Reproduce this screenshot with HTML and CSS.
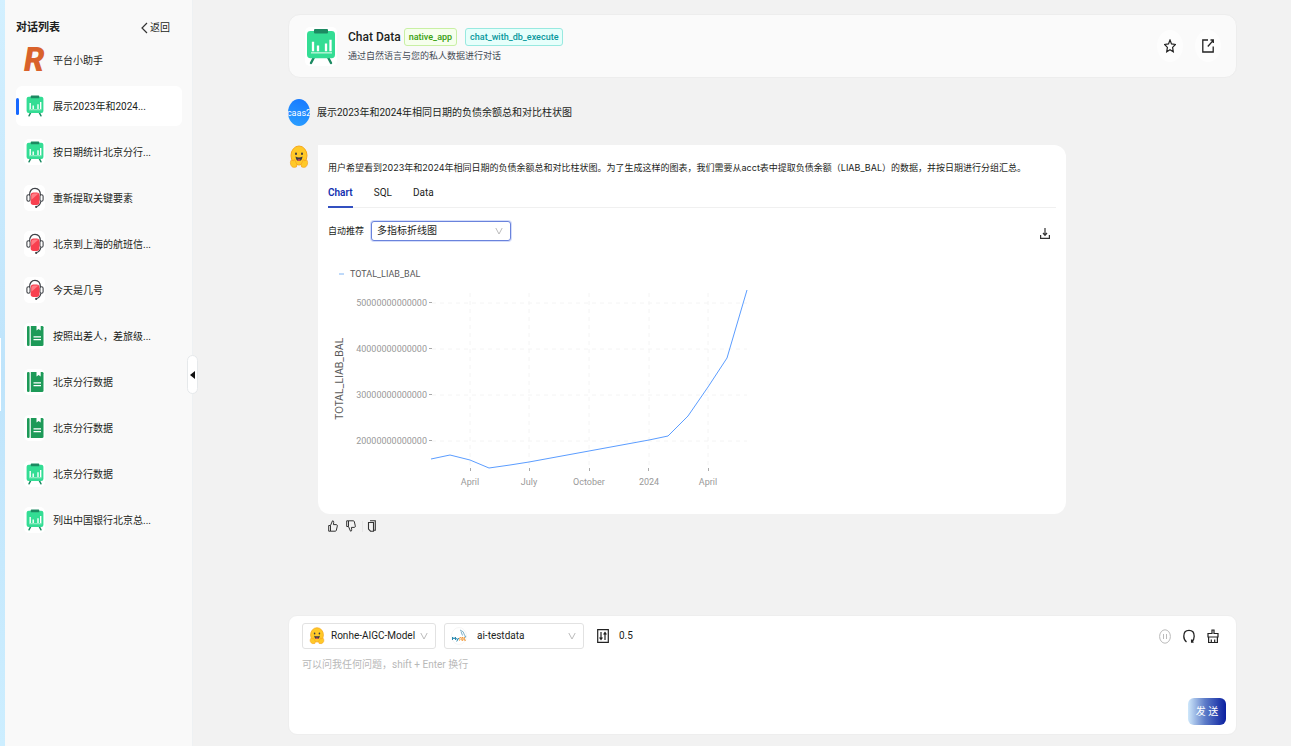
FILE: index.html
```
<!DOCTYPE html>
<html lang="zh-CN">
<head>
    <meta charset="UTF-8">
    <title>Chat Data</title>
    <link rel="stylesheet" href="styles.css">
</head>
<body>
    <!-- 图标 -->
    <svg class="sprite" aria-hidden="true">
        <symbol id="i-board" viewBox="0 0 30 38" preserveAspectRatio="none">
            <path d="M8 30l-3 6M22 30l3 6" stroke="#1c8a62" stroke-width="2.4" stroke-linecap="round"/>
            <rect x="1" y="3" width="28" height="28" rx="3.5" fill="#33dd94"/>
            <rect x="8" y="1" width="14" height="4.6" rx="1" fill="#1c8a62"/>
            <path d="M7 14v10M12 18v6M20 16v8M24.500 12v12" stroke="#fff" stroke-width="2.300"/>
            <path d="M5 25.500h21" stroke="#b5f3d6" stroke-width="1.500"/>
        </symbol>
        <symbol id="i-headset" viewBox="0 0 20 24" preserveAspectRatio="none">
            <path d="M4 9C4 4 6.500 1.500 10 1.500S16 4 16 9" fill="none" stroke="#3f4247" stroke-width="1.400"/>
            <rect x="1" y="8.500" width="3.500" height="7" rx="1.700" fill="#fff" stroke="#3f4247" stroke-width="1.200"/>
            <rect x="15.500" y="8.500" width="3.500" height="7" rx="1.700" fill="#fff" stroke="#3f4247" stroke-width="1.200"/>
            <rect x="5.200" y="6" width="9.800" height="13.500" rx="3" fill="#f8404f"/>
            <path d="M6 9.500Q6.500 7 9 7h5l-8 7z" fill="#ff7d85"/>
            <path d="M16.500 15.500Q16 20 11.500 21.500" fill="none" stroke="#3f4247" stroke-width="1.300"/>
            <circle cx="11.300" cy="21.700" r="1.200" fill="#3f4247"/>
        </symbol>
        <symbol id="i-book" viewBox="0 0 18 24" preserveAspectRatio="none">
            <rect x="1" y="1" width="2.600" height="22" rx="1.200" fill="#1d9a58"/>
            <path d="M4.800 1H16a1.500 1.500 0 0 1 1.500 1.500v19A1.500 1.500 0 0 1 16 23H4.800z" fill="#1d9a58"/>
            <path d="M10.500 1h4.200v5l-2.100-1.700L10.500 6z" fill="#fff"/>
            <path d="M7.500 13h7.500M7.500 16h7.500" stroke="#fff" stroke-width="1.200"/>
        </symbol>
        <symbol id="i-hug" viewBox="0 0 20 24" preserveAspectRatio="none">
            <ellipse cx="10" cy="10.500" rx="8" ry="9.500" fill="#ffc928" stroke="#f7a81c"/>
            <ellipse cx="7" cy="8.700" rx="1" ry="1.300" fill="#3a3b45"/>
            <ellipse cx="13" cy="8.700" rx="1" ry="1.300" fill="#3a3b45"/>
            <path d="M6.500 11.500q3.500 1.800 7 0Q13 16 10 16t-3.500-4.500z" fill="#3a3b45"/>
            <path d="M8.300 15q1.700-1.700 3.400 0-1.700 1.700-3.400 0z" fill="#f24b5b"/>
            <path d="M1.800 15.500Q2.800 14.300 4.200 16l.6-1.200q1.500-.5 1.600 1.500 2.600 3.200 1 5.700-4.500 1.400-5.700-2.300-.7-2.200.1-4.200zM18.200 15.500Q17.200 14.300 15.800 16l-.6-1.200q-1.500-.5-1.600 1.500-2.600 3.200-1 5.700 4.500 1.400 5.700-2.300.7-2.200-.1-4.200z" fill="#ffc928" stroke="#f59a1b" stroke-width=".6"/>
        </symbol>
        <symbol id="i-down" viewBox="0 0 8 8">
            <path d="M.8 1L4 7l3.200-6" fill="none" stroke="#bbb"/>
        </symbol>
    </svg>

    <div class="edge"></div>

    <aside class="sidebar">
        <div class="sideHead">
            <h2>对话列表</h2>
            <a href="#" class="back">
                <svg width="7" height="12" viewBox="0 0 7 12"><path d="M6 1L1 6l5 5" fill="none" stroke="#333" stroke-width="1.200"/></svg>返回
            </a>
        </div>
        <nav class="list">
            <a href="#" class="item">
                <svg class="logo" viewBox="0 0 22 26"><text x="0" y="25">R</text></svg>
                <span>平台小助手</span>
            </a>
            <a href="#" class="item active">
                <i class="pic"><svg><use href="#i-board"/></svg></i><span>展示2023年和2024...</span>
            </a>
            <a href="#" class="item">
                <i class="pic"><svg><use href="#i-board"/></svg></i><span>按日期统计北京分行...</span>
            </a>
            <a href="#" class="item">
                <i class="pic"><svg><use href="#i-headset"/></svg></i><span>重新提取关键要素</span>
            </a>
            <a href="#" class="item">
                <i class="pic"><svg><use href="#i-headset"/></svg></i><span>北京到上海的航班信...</span>
            </a>
            <a href="#" class="item">
                <i class="pic"><svg><use href="#i-headset"/></svg></i><span>今天是几号</span>
            </a>
            <a href="#" class="item">
                <i class="pic"><svg><use href="#i-book"/></svg></i><span>按照出差人，差旅级...</span>
            </a>
            <a href="#" class="item">
                <i class="pic"><svg><use href="#i-book"/></svg></i><span>北京分行数据</span>
            </a>
            <a href="#" class="item">
                <i class="pic"><svg><use href="#i-book"/></svg></i><span>北京分行数据</span>
            </a>
            <a href="#" class="item">
                <i class="pic"><svg><use href="#i-board"/></svg></i><span>北京分行数据</span>
            </a>
            <a href="#" class="item">
                <i class="pic"><svg><use href="#i-board"/></svg></i><span>列出中国银行北京总...</span>
            </a>
        </nav>
        <button type="button" class="fold" aria-label="收起">
            <svg width="5" height="8" viewBox="0 0 5 8"><path d="M5 0v8L0 4z" fill="#111"/></svg>
        </button>
    </aside>

    <main class="main">
        <header class="appHead">
            <i class="appPic"><svg><use href="#i-board"/></svg></i>
            <div class="appInfo">
                <div class="appTitle">
                    <h1>Chat Data</h1>
                    <span class="tag green">native_app</span>
                    <span class="tag cyan">chat_with_db_execute</span>
                </div>
                <p>通过自然语言与您的私人数据进行对话</p>
            </div>
            <button type="button" class="round" aria-label="收藏">
                <svg width="12" height="14" viewBox="0 0 12 14"><path d="M6 1l1.500 3.900 3.900.6-2.800 2.900.7 4.400L6 10.700l-3.300 2.100.7-4.400L.6 5.500l3.900-.6z" fill="none" stroke="#222" stroke-width="1.200"/></svg>
            </button>
            <button type="button" class="round" aria-label="分享">
                <svg width="12" height="14" viewBox="0 0 12 14"><path d="M6 1H.8v12h10.400V7.500M5.800 7.500L11 1.600M8.500 1H11.300v3" fill="none" stroke="#222" stroke-width="1.300"/></svg>
            </button>
        </header>

        <section class="talk">
            <div class="row">
                <div class="avatar">caas2</div>
                <p class="ask">展示2023年和2024年相同日期的负债余额总和对比柱状图</p>
            </div>
            <div class="row answerRow">
                <i class="bot"><svg><use href="#i-hug"/></svg></i>
                <div class="answer">
                    <p class="reply">用户希望看到2023年和2024年相同日期的负债余额总和对比柱状图。为了生成这样的图表，我们需要从acct表中提取负债余额（LIAB_BAL）的数据，并按日期进行分组汇总。</p>
                    <div class="tabs" role="tablist">
                        <button type="button" role="tab" class="on" aria-selected="true">Chart</button>
                        <button type="button" role="tab">SQL</button>
                        <button type="button" role="tab">Data</button>
                    </div>
                    <div class="tools">
                        <label for="chartType">自动推荐</label>
                        <div class="pick">
                            <select id="chartType" class="focus">
                                <option>多指标折线图</option>
                            </select>
                            <svg class="arrow"><use href="#i-down"/></svg>
                        </div>
                        <button type="button" class="download" aria-label="下载">
                            <svg width="10" height="11" viewBox="0 0 10 11"><path d="M.6 7v3.300h8.800V7M5 0v7M3 5l2 2.300L7 5" fill="none" stroke="#333" stroke-width="1.200"/></svg>
                        </button>
                    </div>
                    <svg class="chart" width="440" height="240" viewBox="0 0 440 240">
                        <path class="legendLine" d="M11 14h5"/>
                        <text class="legend" x="22" y="17">TOTAL_LIAB_BAL</text>
                        <text class="axisName" transform="translate(15 160) rotate(-90)">TOTAL_LIAB_BAL</text>
                        <path class="grid" d="M104 43h315M104 89h315M104 135h315M104 181h315M142 33v175M201 33v175M261 33v175M321 33v175M380 33v175"/>
                        <path class="tick" d="M101 42.500h3M101 88.500h3M101 134.500h3M101 180.500h3M142.500 208v3M201.500 208v3M261.500 208v3M320.500 208v3M380.500 208v3"/>
                        <g class="yLabel">
                            <text x="99" y="46">50000000000000</text>
                            <text x="99" y="92">40000000000000</text>
                            <text x="99" y="138">30000000000000</text>
                            <text x="99" y="184">20000000000000</text>
                        </g>
                        <g class="xLabel">
                            <text x="142" y="225">April</text>
                            <text x="201" y="225">July</text>
                            <text x="261" y="225">October</text>
                            <text x="321" y="225">2024</text>
                            <text x="380" y="225">April</text>
                        </g>
                        <polyline class="line" points="103,199 122,195 142,200 161,208 182,205 201,202 261,191 321,180 340,176 360,156 380,127 399,98 419,30"/>
                    </svg>
                </div>
            </div>
            <div class="feedback">
                <button type="button" aria-label="赞">
                    <svg width="10" height="12" viewBox="0 0 10 12"><path d="M.7 5.500h1.800v5.700H.7zM2.500 5.500L4.500.8q1.500 0 1.200 1.700L5.400 4.600h3q1.200.3.900 1.500l-1 4.300q-.2.800-1 .8H2.500" fill="none" stroke="#333"/></svg>
                </button>
                <button type="button" aria-label="踩">
                    <svg width="10" height="12" viewBox="0 0 10 12"><path d="M.7 6.500h1.800V.8H.7zM2.500 6.500l2 4.700q1.500 0 1.200-1.700L5.400 7.400h3q1.200-.3.900-1.500l-1-4.300q-.2-.8-1-.8H2.500" fill="none" stroke="#333"/></svg>
                </button>
                <span class="split"></span>
                <button type="button" aria-label="复制">
                    <svg width="10" height="12" viewBox="0 0 10 12"><path d="M1.500 2.500H6.500v8.700H3.500L1.500 9zM3 .7h5.300V10.200H6.500" fill="none" stroke="#333" stroke-width="1.100"/></svg>
                </button>
            </div>
        </section>

        <form class="composer">
            <div class="bar">
                <div class="pick model">
                    <svg class="lead"><use href="#i-hug"/></svg>
                    <select aria-label="模型">
                        <option>Ronhe-AIGC-Model</option>
                    </select>
                    <svg class="arrow"><use href="#i-down"/></svg>
                </div>
                <div class="pick db">
                    <svg class="lead" viewBox="0 0 16 18">
                        <ellipse cx="8" cy="9" rx="7.500" ry="8.500" fill="#fff" stroke="#eee" stroke-width=".6"/>
                        <path d="M9 3q4 1 4.500 5l1.500 2-2 .2M10 4.500l1.500 4" fill="none" stroke="#5a9ab8" stroke-width=".8"/>
                        <path d="M1.500 13v-3l1.500 2 1.500-2v3M5.500 11l1 2 1.200-2M6.500 13l-.8 1.500" fill="none" stroke="#2b8ab0"/>
                        <path d="M10 10.500q-2 0-1.300 1.200t0 1.500H8M12 10.500v2.800h-1.200v-2.800zM13.300 10v3.200H15" fill="none" stroke="#f29a3c"/>
                    </svg>
                    <select aria-label="数据源">
                        <option>ai-testdata</option>
                    </select>
                    <svg class="arrow"><use href="#i-down"/></svg>
                </div>
                <button type="button" class="temp">
                    <svg width="12" height="14" viewBox="0 0 12 14"><path d="M.7.7h10.600v12.600H.7zM4 3v8M8 3v8M2.600 8.500L4 10.500l1.400-2M6.600 5.500L8 3.500l1.400 2" fill="none" stroke="#222" stroke-width="1.200"/></svg>
                    0.5
                </button>
                <div class="acts">
                    <button type="button" aria-label="暂停" disabled>
                        <svg width="12" height="15" viewBox="0 0 12 15"><ellipse cx="6" cy="7.500" rx="5.400" ry="6.700" fill="none" stroke="#bbb"/><path d="M4.500 5v5M7.500 5v5" stroke="#bbb"/></svg>
                    </button>
                    <button type="button" aria-label="重试">
                        <svg width="12" height="15" viewBox="0 0 12 15"><path d="M3.500 13Q.8 11 .8 7.300.8 1.300 6 1.300t5.200 6q0 3.700-2.400 5.400M8.600 10.500v2.600h2" fill="none" stroke="#222" stroke-width="1.300"/></svg>
                    </button>
                    <button type="button" aria-label="清空">
                        <svg width="12" height="15" viewBox="0 0 12 15"><path d="M5 4.500V1h2v3.500h4V8H1V4.500zM1.600 8v5.500h8.800V8M4.300 13.500v-3M7.700 13.500v-3" fill="none" stroke="#222" stroke-width="1.200"/></svg>
                    </button>
                </div>
            </div>
            <textarea aria-label="消息" placeholder="可以问我任何问题，shift + Enter 换行"></textarea>
            <button type="submit" class="send">发 送</button>
        </form>
    </main>
</body>
</html>
```
FILE: styles.css
```
* {
    box-sizing: border-box;
}
body {
    margin: 0;
    min-height: 100vh;
    display: flex;
    background: #f2f2f2;
    color: #1c1e21;
    font: 10px/16px Roboto, "Noto Sans CJK SC", sans-serif;
}
h1, h2, p {
    margin: 0;
}
a {
    color: inherit;
    text-decoration: none;
}
button {
    padding: 0;
    border: 0;
    background: none;
    color: inherit;
    font: inherit;
}
svg {
    display: block;
    flex: none;
}
.sprite {
    position: absolute;
    width: 0;
    height: 0;
}

/* 左侧 */
.edge {
    width: 5px;
    background: linear-gradient(#d3f0ff, #bfe4fb 50%, #cdeeff);
}
.edge:before {
    content: '';
    position: absolute;
    left: 0;
    top: 338px;
    width: 1px;
    height: 73px;
    background: #fff;
}
.sidebar {
    position: relative;
    width: 188px;
    padding: 19px 10px 0 11px;
    background: #f9f9f9;
    border-right: 1px solid #eef1f3;
}
.sideHead {
    display: flex;
    align-items: center;
    justify-content: space-between;
    height: 18px;
    padding-right: 12px;
}
.sideHead h2 {
    font-size: 11px;
    font-weight: 700;
}
.back {
    display: flex;
    align-items: center;
    gap: 2px;
}
.list {
    display: flex;
    flex-direction: column;
    gap: 6px;
    margin-top: 3px;
}
.item {
    display: flex;
    align-items: center;
    gap: 8px;
    height: 40px;
    padding-left: 8px;
    border-radius: 6px;
    white-space: nowrap;
}
.item span {
    padding-top: 1px;
}
.active {
    padding-left: 0;
    background: #fff;
}
.active:before {
    content: '';
    width: 3px;
    height: 17px;
    margin-right: -3px;
    border-radius: 2px;
    background: #1668ff;
}
.pic {
    display: flex;
    align-items: center;
    justify-content: center;
    width: 21px;
    height: 26px;
    border-radius: 5px;
    background: #fff;
}
.pic svg {
    width: 18px;
    height: 22px;
}
.logo {
    width: 21px;
    height: 26px;
    overflow: visible;
}
.logo text {
    font: italic 900 34px Roboto, sans-serif;
    fill: #d9622b;
}
.fold {
    position: absolute;
    right: -6px;
    top: 355px;
    display: flex;
    align-items: center;
    justify-content: center;
    width: 11px;
    height: 39px;
    border: 1px solid #e6e9eb;
    border-radius: 6px;
    background: #fff;
}

/* 右侧 */
.main {
    flex: 1;
    min-width: 0;
    display: flex;
    flex-direction: column;
    padding: 14px 54px 11px 95px;
}
.appHead {
    display: flex;
    align-items: center;
    height: 64px;
    padding: 0 15px 0 16px;
    border: 1px solid #ededed;
    border-radius: 12px;
    background: #fafafa;
}
.appPic {
    display: flex;
    padding: 1px;
    border-radius: 5px;
    background: #fff;
}
.appPic svg {
    width: 30px;
    height: 37px;
}
.appInfo {
    flex: 1;
    padding-left: 11px;
}
.appTitle {
    display: flex;
    align-items: center;
    height: 20px;
}
.appTitle h1 {
    margin-right: 3px;
    font-size: 12px;
    font-weight: 500;
}
.appInfo p {
    height: 18px;
    line-height: 18px;
    font-size: 9px;
    color: #444a55;
}
.tag {
    padding: 0 4px;
    border: 1px solid;
    border-radius: 3px;
    font-size: 9px;
    font-weight: 500;
}
.green {
    margin-right: 8px;
    color: #389e0d;
    background: #f6ffed;
    border-color: #c9f0a4;
}
.cyan {
    color: #08979c;
    background: #e6fffb;
    border-color: #98e9e0;
}
.round {
    display: flex;
    align-items: center;
    justify-content: center;
    width: 26px;
    height: 32px;
    margin-left: 12px;
    border-radius: 50%;
    background: #fdfdfd;
}

/* 对话 */
.talk {
    flex: 1;
    padding-top: 21px;
}
.row {
    display: flex;
    width: 82%;
}
.avatar {
    display: flex;
    align-items: center;
    justify-content: center;
    width: 22px;
    height: 27px;
    border-radius: 50%;
    overflow: hidden;
    background: linear-gradient(20deg, #2ba0ff, #1677ff);
    color: #fff;
    font-size: 9px;
}
.ask {
    padding-left: 7px;
    line-height: 27px;
}
.answerRow {
    margin-top: 19px;
}
.bot {
    width: 30px;
    padding-left: 1px;
}
.bot svg {
    width: 20px;
    height: 24px;
}
.answer {
    flex: 1;
    padding: 11px 10px 14px;
    border-radius: 0 12px 12px 12px;
    background: #fff;
}
.reply {
    font-family: Inter, "Noto Sans CJK SC", sans-serif;
    font-size: 9px;
    line-height: 24px;
}
.tabs {
    display: flex;
    gap: 21px;
    height: 28px;
    border-bottom: 1px solid #f0f0f0;
}
.tabs button {
    height: 28px;
    border-bottom: 2px solid transparent;
}
.tabs .on {
    border-color: #3350c0;
    color: #1330b0;
    font-weight: 600;
}
.tools {
    display: flex;
    align-items: center;
    gap: 7px;
    height: 22px;
    margin-top: 12px;
}
.tools label {
    font-size: 9px;
}
.pick {
    position: relative;
    width: 140px;
}
.pick select {
    appearance: none;
    width: 100%;
    height: 26px;
    padding: 0 20px 0 32px;
    border: 1px solid #e2e2e2;
    border-radius: 3px;
    background: #fff;
    color: inherit;
    font: inherit;
}
.pick .focus {
    display: block;
    height: 20px;
    padding: 0 20px 0 5px;
    border-color: #6a83dc;
    box-shadow: 0 0 0 1px #d5ddfa;
}
.arrow {
    position: absolute;
    right: 8px;
    top: 50%;
    width: 8px;
    height: 8px;
    margin-top: -4px;
    pointer-events: none;
}
.lead {
    position: absolute;
    left: 7px;
    top: 4px;
    width: 16px;
    height: 18px;
}
.download {
    margin-left: auto;
    margin-right: 6px;
    padding-top: 5px;
}

/* 图表 */
.chart {
    margin-top: 18px;
    font-size: 9px;
}
.legendLine {
    stroke: #7fb4f5;
}
.legend, .axisName {
    fill: #595959;
}
.axisName {
    font-family: Inter, sans-serif;
    font-size: 10px;
}
.grid {
    fill: none;
    stroke: #f4f4f4;
    stroke-dasharray: 4 4;
}
.tick {
    stroke: #aaa;
}
.yLabel {
    fill: #999;
    text-anchor: end;
}
.xLabel {
    fill: #999;
    text-anchor: middle;
}
.line {
    fill: none;
    stroke: #5b9dff;
}

.feedback {
    display: flex;
    align-items: center;
    gap: 8px;
    padding: 6px 0 0 40px;
}
.split {
    width: 1px;
    height: 11px;
    margin: 0 -4px 0 -2px;
    background: #e6e6e6;
}

/* 输入区 */
.composer {
    display: flex;
    flex-direction: column;
    height: 120px;
    padding: 7px 10px 9px 13px;
    border: 1px solid #eee;
    border-radius: 9px;
    background: #fff;
}
.bar {
    display: flex;
    align-items: center;
    gap: 8px;
    height: 26px;
}
.model {
    width: 134px;
}
.model select {
    padding: 0 16px 0 28px;
}
.temp {
    display: flex;
    align-items: center;
    gap: 10px;
    margin-left: 5px;
}
.acts {
    display: flex;
    gap: 12px;
    margin-left: auto;
    padding-right: 7px;
}
.composer textarea {
    flex: 1;
    min-height: 0;
    padding: 8px 0 0;
    border: 0;
    outline: 0;
    resize: none;
    background: none;
    font: inherit;
}
.composer textarea::placeholder {
    color: #b8b8b8;
}
.send {
    align-self: flex-end;
    width: 38px;
    height: 27px;
    border-radius: 6px;
    background: linear-gradient(90deg, #cfe8fb, #5d7cc8 45%, #0a1fa0);
    color: #fff;
}
```
